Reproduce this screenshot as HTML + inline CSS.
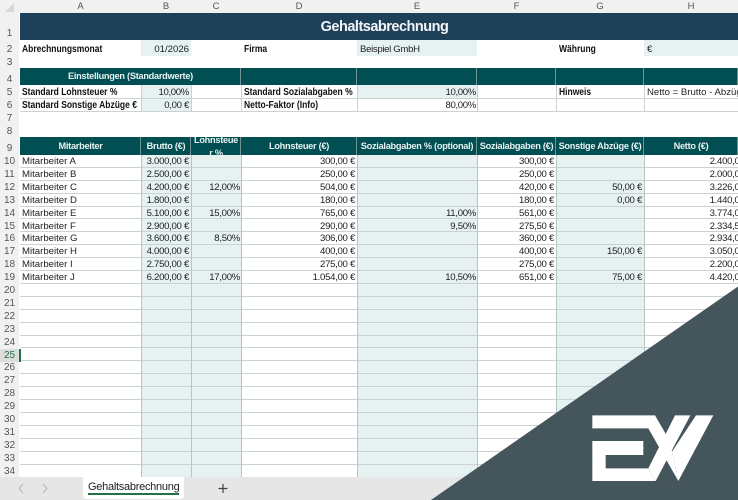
<!DOCTYPE html>
<html lang="de"><head><meta charset="utf-8"><title>Gehaltsabrechnung</title>
<style>
html,body{margin:0;padding:0;background:#fff}
#p{position:relative;width:738px;height:500px;overflow:hidden;background:#fff;font:9.6px/13px "Liberation Sans",sans-serif;color:#222;filter:blur(.35px)}
#p div{position:absolute}
.b{background:#e6f1f1}
.v{width:1px;top:155px;height:322px;background:#b4c6c6}
.r{left:20px;width:718px;height:12.9px;border-bottom:1px solid #ccd2d2;box-sizing:border-box}
.r i,.s i{font-style:normal;position:absolute;top:0;white-space:nowrap;letter-spacing:-.3px}
.r i.A{letter-spacing:0}
.A{left:2px}.B{right:549px}.C{right:498px}.D{right:383px}.E{right:262px}.F{right:184px}.G{right:96px}.H{right:-14px}
.n{left:0;width:19px;text-align:center;font-size:10px;color:#555;line-height:13px}
.c{top:0;height:13px;line-height:13px;text-align:center;color:#555;font-size:9.5px}
.t{background:#014f52;color:#e8f2f2;font-weight:bold;text-align:center;white-space:nowrap;overflow:hidden;font-size:9.2px;letter-spacing:-.27px;box-shadow:inset -1px 0 #6f9393}
.l{font-weight:bold;color:#111;white-space:nowrap;font-size:10px;transform:scaleX(.85);transform-origin:0 0}
.x{white-space:nowrap;letter-spacing:-.33px}
</style></head><body><div id="p">
<div style="left:0;top:0;width:738px;height:13px;background:#f1f1f1"></div>
<div style="left:0;top:0;width:19px;height:477px;background:#f1f1f1"></div>
<div style="left:5px;top:3px;width:0;height:0;border-left:9px solid transparent;border-bottom:9px solid #d8d8d8"></div>
<div class="c" style="left:20px;width:121px">A</div><div class="c" style="left:141px;width:50px">B</div><div class="c" style="left:191px;width:50px">C</div><div class="c" style="left:241px;width:116px">D</div><div class="c" style="left:357px;width:120px">E</div><div class="c" style="left:477px;width:79px">F</div><div class="c" style="left:556px;width:88px">G</div><div class="c" style="left:644px;width:94px">H</div>

<div style="left:20px;top:13px;width:718px;height:27px;background:#1f4059;color:#f2f6f8;font-size:14.5px;font-weight:bold;line-height:28px;text-align:center;text-indent:11px;letter-spacing:-.5px">Gehaltsabrechnung</div>

<div class="b" style="left:141px;top:40px;width:50px;height:16px"></div>
<div class="b" style="left:357px;top:40px;width:120px;height:16px"></div>
<div class="b" style="left:644px;top:40px;width:94px;height:16px"></div>
<div class="l" style="left:22px;top:43px">Abrechnungsmonat</div>
<div class="x" style="left:141px;width:48px;text-align:right;top:43px;letter-spacing:0">01/2026</div>
<div class="l" style="left:244px;top:43px">Firma</div>
<div class="x" style="left:360px;top:43px">Beispiel GmbH</div>
<div class="l" style="left:559px;top:43px">Währung</div>
<div class="x" style="left:647px;top:43px">€</div>

<div class="t" style="left:20px;top:68px;width:221px;height:17px;line-height:17px">Einstellungen (Standardwerte)</div>
<div class="t" style="left:241px;top:68px;width:116px;height:17px"></div>
<div class="t" style="left:357px;top:68px;width:120px;height:17px"></div>
<div class="t" style="left:477px;top:68px;width:79px;height:17px"></div>
<div class="t" style="left:556px;top:68px;width:88px;height:17px"></div>
<div class="t" style="left:644px;top:68px;width:94px;height:17px"></div>

<div class="b" style="left:141px;top:85px;width:50px;height:26px"></div>
<div class="b" style="left:357px;top:85px;width:120px;height:13px"></div>
<div style="left:20px;top:98px;width:718px;height:1px;background:#ccd2d2"></div>
<div style="left:20px;top:111px;width:718px;height:1px;background:#ccd2d2"></div>
<div style="left:141px;top:85px;width:1px;height:26px;background:#ccd2d2"></div><div style="left:191px;top:85px;width:1px;height:26px;background:#ccd2d2"></div><div style="left:241px;top:85px;width:1px;height:26px;background:#ccd2d2"></div><div style="left:357px;top:85px;width:1px;height:26px;background:#ccd2d2"></div><div style="left:477px;top:85px;width:1px;height:26px;background:#ccd2d2"></div><div style="left:556px;top:85px;width:1px;height:26px;background:#ccd2d2"></div><div style="left:644px;top:85px;width:1px;height:26px;background:#ccd2d2"></div>
<div class="l" style="left:22px;top:86px">Standard Lohnsteuer %</div>
<div class="x" style="left:141px;width:48px;text-align:right;top:86px">10,00%</div>
<div class="l" style="left:244px;top:86px">Standard Sozialabgaben %</div>
<div class="x" style="left:357px;width:119px;text-align:right;top:86px">10,00%</div>
<div class="l" style="left:559px;top:86px">Hinweis</div>
<div class="x" style="left:647px;top:86px;letter-spacing:0">Netto = Brutto - Abzüge</div>
<div class="l" style="left:22px;top:99px">Standard Sonstige Abzüge €</div>
<div class="x" style="left:141px;width:48px;text-align:right;top:99px">0,00 €</div>
<div class="l" style="left:244px;top:99px">Netto-Faktor (Info)</div>
<div class="x" style="left:357px;width:119px;text-align:right;top:99px">80,00%</div>

<div class="b" style="left:141px;top:155px;width:100px;height:322px"></div>
<div class="b" style="left:357px;top:155px;width:120px;height:322px"></div>
<div class="b" style="left:556px;top:155px;width:88px;height:322px"></div>

<div class="t" style="left:20px;top:137px;width:121px;height:18px;line-height:18px">Mitarbeiter</div>
<div class="t" style="left:141px;top:137px;width:50px;height:18px;line-height:18px">Brutto (€)</div>
<div class="t" style="left:191px;top:137px;width:50px;height:18px;line-height:12.5px"><span style="position:relative;top:-3px;display:block">Lohnsteue<br>r %</span></div>
<div class="t" style="left:241px;top:137px;width:116px;height:18px;line-height:18px">Lohnsteuer (€)</div>
<div class="t" style="left:357px;top:137px;width:120px;height:18px;line-height:18px">Sozialabgaben % (optional)</div>
<div class="t" style="left:477px;top:137px;width:79px;height:18px;line-height:18px">Sozialabgaben (€)</div>
<div class="t" style="left:556px;top:137px;width:88px;height:18px;line-height:18px">Sonstige Abzüge (€)</div>
<div class="t" style="left:644px;top:137px;width:94px;height:18px;line-height:18px">Netto (€)</div>

<div class="s" style="left:0;top:0">
<div class="r" style="top:155px"><i class="A">Mitarbeiter A</i><i class="B">3.000,00 €</i><i class="D">300,00 €</i><i class="F">300,00 €</i><i class="H">2.400,00 €</i></div>
<div class="r" style="top:167.9px"><i class="A">Mitarbeiter B</i><i class="B">2.500,00 €</i><i class="D">250,00 €</i><i class="F">250,00 €</i><i class="H">2.000,00 €</i></div>
<div class="r" style="top:180.8px"><i class="A">Mitarbeiter C</i><i class="B">4.200,00 €</i><i class="C">12,00%</i><i class="D">504,00 €</i><i class="F">420,00 €</i><i class="G">50,00 €</i><i class="H">3.226,00 €</i></div>
<div class="r" style="top:193.7px"><i class="A">Mitarbeiter D</i><i class="B">1.800,00 €</i><i class="D">180,00 €</i><i class="F">180,00 €</i><i class="G">0,00 €</i><i class="H">1.440,00 €</i></div>
<div class="r" style="top:206.6px"><i class="A">Mitarbeiter E</i><i class="B">5.100,00 €</i><i class="C">15,00%</i><i class="D">765,00 €</i><i class="E">11,00%</i><i class="F">561,00 €</i><i class="H">3.774,00 €</i></div>
<div class="r" style="top:219.5px"><i class="A">Mitarbeiter F</i><i class="B">2.900,00 €</i><i class="D">290,00 €</i><i class="E">9,50%</i><i class="F">275,50 €</i><i class="H">2.334,50 €</i></div>
<div class="r" style="top:232.4px"><i class="A">Mitarbeiter G</i><i class="B">3.600,00 €</i><i class="C">8,50%</i><i class="D">306,00 €</i><i class="F">360,00 €</i><i class="H">2.934,00 €</i></div>
<div class="r" style="top:245.3px"><i class="A">Mitarbeiter H</i><i class="B">4.000,00 €</i><i class="D">400,00 €</i><i class="F">400,00 €</i><i class="G">150,00 €</i><i class="H">3.050,00 €</i></div>
<div class="r" style="top:258.2px"><i class="A">Mitarbeiter I</i><i class="B">2.750,00 €</i><i class="D">275,00 €</i><i class="F">275,00 €</i><i class="H">2.200,00 €</i></div>
<div class="r" style="top:271.1px"><i class="A">Mitarbeiter J</i><i class="B">6.200,00 €</i><i class="C">17,00%</i><i class="D">1.054,00 €</i><i class="E">10,50%</i><i class="F">651,00 €</i><i class="G">75,00 €</i><i class="H">4.420,00 €</i></div>
<div class="r" style="top:284px"></div><div class="r" style="top:296.9px"></div><div class="r" style="top:309.8px"></div><div class="r" style="top:322.7px"></div><div class="r" style="top:335.6px"></div><div class="r" style="top:348.5px"></div><div class="r" style="top:361.4px"></div><div class="r" style="top:374.3px"></div><div class="r" style="top:387.2px"></div><div class="r" style="top:400.1px"></div><div class="r" style="top:413px"></div><div class="r" style="top:425.9px"></div><div class="r" style="top:438.8px"></div><div class="r" style="top:451.7px"></div>
</div>

<div class="v" style="left:141px"></div><div class="v" style="left:191px"></div><div class="v" style="left:241px"></div><div class="v" style="left:357px"></div><div class="v" style="left:477px"></div><div class="v" style="left:556px"></div><div class="v" style="left:644px"></div>

<div style="left:0;top:348.5px;width:19px;height:13px;background:#dcdcdc"></div>
<div style="left:19px;top:348.5px;width:1.5px;height:13px;background:#217346"></div>
<div class="n" style="top:27px">1</div><div class="n" style="top:43px">2</div><div class="n" style="top:56px">3</div><div class="n" style="top:73px">4</div><div class="n" style="top:86px">5</div><div class="n" style="top:99px">6</div><div class="n" style="top:112px">7</div><div class="n" style="top:125px">8</div><div class="n" style="top:142px">9</div>
<div class="n" style="top:155px">10</div><div class="n" style="top:168px">11</div><div class="n" style="top:181px">12</div><div class="n" style="top:194px">13</div><div class="n" style="top:207px">14</div><div class="n" style="top:220px">15</div><div class="n" style="top:232px">16</div><div class="n" style="top:245px">17</div><div class="n" style="top:258px">18</div><div class="n" style="top:271px">19</div><div class="n" style="top:284px">20</div><div class="n" style="top:297px">21</div><div class="n" style="top:310px">22</div><div class="n" style="top:323px">23</div><div class="n" style="top:336px">24</div><div class="n" style="top:349px;color:#217346">25</div><div class="n" style="top:361px">26</div><div class="n" style="top:374px">27</div><div class="n" style="top:387px">28</div><div class="n" style="top:400px">29</div><div class="n" style="top:413px">30</div><div class="n" style="top:426px">31</div><div class="n" style="top:439px">32</div><div class="n" style="top:452px">33</div><div class="n" style="top:465px">34</div>

<div style="left:0;top:477px;width:738px;height:23px;background:#e6e6e6"></div>
<div style="left:83px;top:477px;width:101px;height:22px;background:#fff;border-radius:0 0 3px 3px"></div>
<div style="left:88px;top:480px;font-size:11px;line-height:14px;letter-spacing:-.27px;color:#222;white-space:nowrap">Gehaltsabrechnung</div>
<div style="left:88px;top:493px;width:91px;height:1.5px;background:#217346"></div>
<svg style="position:absolute;left:0;top:477px" width="240" height="23" viewBox="0 0 240 23"><path d="M23 7l-4 4.500 4 4.500M43 7l4 4.500-4 4.500" fill="none" stroke="#b5b5b5" stroke-width="1"/><path d="M223 7v9M218.500 11.500h9" stroke="#444" stroke-width="1.200" fill="none"/></svg>

<svg style="position:absolute;left:0;top:0" width="738" height="500" viewBox="0 0 738 500"><polygon points="431,500 738,286.500 738,500" fill="#45555c"/></svg>
<svg style="position:absolute;left:585px;top:410px" width="135" height="76" viewBox="0 0 405 228"><g fill="#fff"><polygon points="22,16 210,16 228,55 22,55"/><polygon points="22,93 175,93 175,135 62,135 62,175 190,175 212,213 22,213"/><polygon points="210,16 240,68 261,125 280,213 190,55"/><polygon points="270,16 316,16 212,213 190,175"/><polygon points="333,16 385,16 280,213 261,125"/></g></svg>
</div></body></html>
